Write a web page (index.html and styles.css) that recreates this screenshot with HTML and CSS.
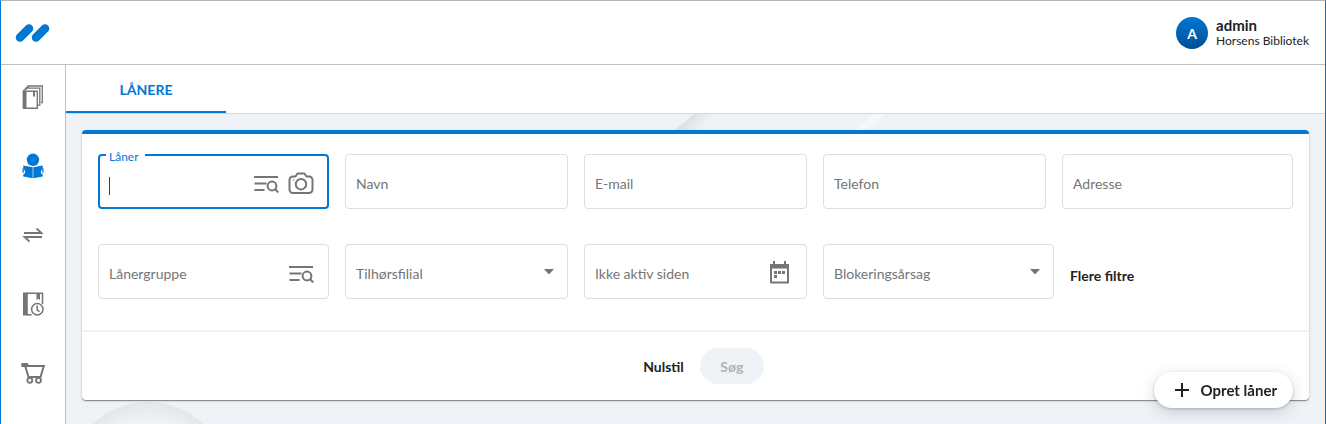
FILE: index.html
```html
<!DOCTYPE html>
<html lang="da">

<head>
    <meta charset="UTF-8">
    <meta name="viewport" content="width=device-width, initial-scale=1.0">
    <title>Lånere</title>
    <link rel="stylesheet" href="styles.css">
</head>

<body>
    <svg class="sprite" aria-hidden="true">
        <symbol id="list-search" viewBox="0 0 26 18">
            <path d="M1 2h24M1.500 8.500h12M1.500 15h10" fill="none" stroke="currentColor" stroke-width="2" />
            <circle cx="19" cy="11" r="4.400" fill="none" stroke="currentColor" stroke-width="2" />
            <path d="M22 14l3.200 3.500" fill="none" stroke="currentColor" stroke-width="2" />
        </symbol>
    </svg>

    <header class="header">
        <a class="logo" href="#" aria-label="Forside">
            <svg width="36" height="20" viewBox="0 0 36 20">
                <path d="M6 14.500L15 5.500M22 14.500L31 5.500" stroke="#0078d4" stroke-width="8.600" stroke-linecap="round" />
            </svg>
        </a>
        <div class="user">
            <span class="avatar">A</span>
            <div class="user-info">
                <span class="user-name">admin</span>
                <span class="user-library">Horsens Bibliotek</span>
            </div>
        </div>
    </header>

    <div class="layout">
        <nav class="sidebar">
            <a href="#" aria-label="Materialer">
                <svg width="24" height="24" viewBox="0 0 24 24" fill="none" stroke="currentColor">
                    <path d="M7 3V1h14.300v16.500H20" stroke-width="1.300" />
                    <path d="M5 5V3.200h13.800v17H17" stroke-width="1.300" />
                    <path d="M2.500 6.300H16.300V23.300H2.500z" stroke-width="1.400" />
                    <path d="M1.800 6.300h3.700v17.200h-3.700z" fill="currentColor" stroke="none" />
                    <path d="M2 6.500L7.500 1" stroke-width="1.400" />
                    <path d="M13 7v4.500" stroke-width="2" />
                </svg>
            </a>
            <a class="active" href="#" aria-label="Lånere">
                <svg width="24" height="26" viewBox="0 0 24 26" fill="currentColor">
                    <circle cx="12" cy="6.800" r="6.200" />
                    <path d="M2.300 12.500L11.700 14.200V25.200L2.300 23.500V21.300A2.200 2.200 0 0 0 3.500 17.500A2.200 2.200 0 0 0 2.300 15.500z" />
                    <path d="M21.700 12.500L12.300 14.200V25.200L21.700 23.500V21.300A2.200 2.200 0 0 1 20.500 17.500A2.200 2.200 0 0 1 21.700 15.500z" />
                    <path d="M1.500 15.300h1.300v4.500h-1.300zM21.200 15.300h1.300v4.500h-1.300z" />
                </svg>
            </a>
            <a href="#" aria-label="Udlån og aflevering">
                <svg width="24" height="24" viewBox="0 0 24 24" fill="none" stroke="currentColor" stroke-width="1.800">
                    <path d="M3 10h17.500L15.500 5.500M21 14H3.500L8.500 18.500" />
                </svg>
            </a>
            <a href="#" aria-label="Reserveringer">
                <svg width="24" height="24" viewBox="0 0 24 24" fill="none" stroke="currentColor" stroke-width="1.500">
                    <path d="M2 .500h4.800v23H2z" fill="currentColor" stroke="none" />
                    <path d="M6 1.200h15.500V12M6 22.800h4.500" />
                    <path d="M15.500 1h3.500v7l-1.700-1.200L15.500 8z" fill="currentColor" stroke="none" />
                    <circle cx="16.300" cy="17.300" r="5.700" />
                    <path d="M16.200 13.500v4.300l2.300 2" />
                </svg>
            </a>
            <a href="#" aria-label="Indkøb">
                <svg width="24" height="24" viewBox="0 0 24 24" fill="none" stroke="currentColor" stroke-width="1.800">
                    <path d="M.8 2.500h6v3h-6z" fill="currentColor" stroke-width="1" />
                    <path d="M4 4.500L7.500 16H19.500L22.800 5H5" stroke-width="2" />
                    <circle cx="8.800" cy="19.300" r="2.500" fill="#fff" />
                    <circle cx="17.500" cy="19.300" r="2.500" fill="#fff" />
                </svg>
            </a>
        </nav>

        <div class="content">
            <nav class="tabs">
                <a class="tab" href="#">LÅNERE</a>
            </nav>

            <main class="main">
                <svg class="backdrop" width="900" height="420" viewBox="0 0 900 420" aria-hidden="true">
                    <defs>
                        <linearGradient id="edge" gradientUnits="userSpaceOnUse" x1="618" y1="8" x2="630" y2="20">
                            <stop offset="0" stop-color="#dcdfe0" />
                            <stop offset="1" stop-color="#eff3f7" />
                        </linearGradient>
                        <radialGradient id="disc">
                            <stop offset="0" stop-color="#eff3f7" />
                            <stop offset=".75" stop-color="#eff3f7" />
                            <stop offset="1" stop-color="#e3e7e8" />
                        </radialGradient>
                    </defs>
                    <path d="M608 17L628 0H665L645 17z" fill="url(#edge)" />
                    <path d="M788 17L808 0H820L800 17z" fill="#f5f7f9" />
                    <circle cx="82" cy="368" r="80" fill="url(#disc)" />
                </svg>

                <form class="card">
                    <div class="filters">
                        <div class="row row-first">
                            <div class="field focused">
                                <input id="borrower" type="text">
                                <label for="borrower">Låner</label>
                                <span class="caret"></span>
                                <div class="field-icons">
                                    <button type="button" aria-label="Søg i liste">
                                        <svg width="26" height="18"><use href="#list-search" /></svg>
                                    </button>
                                    <button type="button" aria-label="Scan med kamera">
                                        <svg width="26" height="24" viewBox="0 0 26 24" fill="none" stroke="currentColor" stroke-width="2">
                                            <path d="M5 4.500h2.500L9.500 1.500h7l2 3H21A3.500 3.500 0 0 1 24.500 8v9.500A3.500 3.500 0 0 1 21 21H5a3.500 3.500 0 0 1-3.500-3.500V8A3.500 3.500 0 0 1 5 4.500z" stroke-linejoin="round" />
                                            <circle cx="13" cy="12.200" r="5.200" />
                                            <circle cx="5.500" cy="8" r=".8" fill="currentColor" stroke="none" />
                                        </svg>
                                    </button>
                                </div>
                            </div>
                            <div class="field">
                                <input id="name" type="text">
                                <label for="name">Navn</label>
                            </div>
                            <div class="field">
                                <input id="email" type="text">
                                <label for="email">E-mail</label>
                            </div>
                            <div class="field">
                                <input id="phone" type="text">
                                <label for="phone">Telefon</label>
                            </div>
                            <div class="field">
                                <input id="address" type="text">
                                <label for="address">Adresse</label>
                            </div>
                        </div>
                        <div class="row row-second">
                            <div class="field">
                                <input id="group" type="text">
                                <label for="group">Lånergruppe</label>
                                <div class="field-icons">
                                    <button type="button" aria-label="Vælg lånergruppe">
                                        <svg width="26" height="18"><use href="#list-search" /></svg>
                                    </button>
                                </div>
                            </div>
                            <div class="field">
                                <select id="branch">
                                    <option></option>
                                </select>
                                <label for="branch">Tilhørsfilial</label>
                                <svg class="arrow" width="10" height="6"><path d="M0 0h10L5 5.500z" fill="currentColor" /></svg>
                            </div>
                            <div class="field">
                                <input id="inactive" type="text">
                                <label for="inactive">Ikke aktiv siden</label>
                                <div class="field-icons">
                                    <button type="button" aria-label="Vælg dato">
                                        <svg width="24" height="28" viewBox="0 0 24 28" fill="none" stroke="currentColor" stroke-width="2">
                                            <path d="M3 5h17v17.500H3z" stroke-linejoin="round" />
                                            <path d="M2 4h19v4.500H2z" fill="currentColor" stroke="none" />
                                            <path d="M6 1v4M17 1v4" />
                                            <path d="M6 12.500h3m1 0h3m1 0h3M6 16.500h3" stroke-width="3" />
                                        </svg>
                                    </button>
                                </div>
                            </div>
                            <div class="field">
                                <select id="block">
                                    <option></option>
                                </select>
                                <label for="block">Blokeringsårsag</label>
                                <svg class="arrow" width="10" height="6"><path d="M0 0h10L5 5.500z" fill="currentColor" /></svg>
                            </div>
                            <button class="text-button more" type="button">Flere filtre</button>
                        </div>
                    </div>
                    <div class="actions">
                        <button class="text-button" type="reset">Nulstil</button>
                        <button class="search-button" type="submit" disabled>Søg</button>
                    </div>
                </form>
            </main>
        </div>
    </div>

    <button class="create-button" type="button">
        <svg width="14" height="14" viewBox="0 0 14 14"><path d="M7 0v14M0 7h14" stroke="currentColor" stroke-width="2" /></svg>
        Opret låner
    </button>
</body>

</html>
```
FILE: styles.css
```css
* {
    box-sizing: border-box;
}

body {
    margin: 0;
    min-height: 100vh;
    display: flex;
    flex-direction: column;
    border: 1px solid #0078d4;
    border-top-color: #b4b5bb;
    border-bottom: none;
    background: #fff;
    color: #222;
    font-family: Lato, "Open Sans", sans-serif;
    font-size: 14px;
}

button,
input,
select {
    font: inherit;
    color: inherit;
    border: none;
    background: none;
    padding: 0;
    margin: 0;
}

button {
    cursor: pointer;
}

svg {
    display: block;
}

.sprite {
    display: none;
}

.header {
    height: 64px;
    display: flex;
    align-items: center;
    justify-content: space-between;
    padding: 0 16px 0 13px;
    border-bottom: 1px solid #b9c1c9;
}

.user {
    display: flex;
    align-items: center;
    gap: 8px;
}

.avatar {
    width: 32px;
    height: 32px;
    border-radius: 50%;
    background: linear-gradient(#0078d4, #004e92);
    color: #fff;
    font-weight: bold;
    line-height: 34px;
    text-align: center;
}

.user-info {
    display: flex;
    flex-direction: column;
    padding-top: 1px;
    line-height: 16px;
}

.user-name {
    font-size: 15px;
    font-weight: bold;
}

.user-library {
    font-size: 12px;
}

.layout {
    flex: 1;
    display: flex;
}

.sidebar {
    flex: none;
    width: 65px;
    display: flex;
    flex-direction: column;
    align-items: center;
    gap: 45px;
    padding-top: 20px;
    border-right: 1px solid #b9c1c9;
}

.sidebar a {
    height: 24px;
    display: flex;
    align-items: center;
    color: #757575;
}

.sidebar .active {
    color: #0078d4;
}

.content {
    flex: 1;
    display: flex;
    flex-direction: column;
}

.tabs {
    display: flex;
    border-bottom: 1px solid #d5d7d9;
}

.tab {
    width: 160px;
    height: 48px;
    border-bottom: 2px solid #0078d4;
    color: #0078d4;
    font-weight: bold;
    line-height: 50px;
    text-align: center;
    text-decoration: none;
}

.main {
    flex: 1;
    position: relative;
    overflow: hidden;
    padding: 16px 16px 23px;
    background: #eff3f7;
}

.backdrop {
    position: absolute;
    top: 0;
    left: 0;
}

.card {
    position: relative;
    background: #fff;
    border-top: 4px solid #0078d4;
    border-radius: 4px;
    box-shadow: 0 1px 1px rgba(0, 0, 0, 0.4), 0 1px 3px rgba(0, 0, 0, 0.12);
}

.filters {
    display: flex;
    flex-direction: column;
    gap: 35px;
    padding: 20px 16px 31px;
}

.row {
    display: grid;
    gap: 16px;
}

.row-first {
    grid-template-columns: 231fr 223fr 223fr 223fr 231fr;
}

.row-second {
    grid-template-columns: 231fr 223fr 223fr 231fr 223fr;
}

/* input, label and icons share one grid cell */
.field {
    display: grid;
    align-items: center;
    height: 55px;
    color: #757575;
}

.field > * {
    grid-area: 1 / 1;
}

.field input,
.field select {
    width: 100%;
    min-width: 0;
    height: 100%;
    padding: 0 11px;
    border: 1px solid #dedede;
    border-radius: 4px;
    background: #fff;
    appearance: none;
    outline: none;
}

.field label {
    justify-self: start;
    padding: 3px 11px 0;
    pointer-events: none;
}

.focused input {
    border: 2px solid #0078d4;
}

.focused label {
    align-self: start;
    margin: -5px 0 0 8px;
    padding: 0 6px 0 3px;
    background: #fff;
    color: #0078d4;
    font-size: 12px;
    line-height: 16px;
}

.caret {
    width: 1px;
    height: 18px;
    margin: 8px 0 0 11px;
    background: #004e92;
}

.field-icons {
    justify-self: end;
    display: flex;
    align-items: center;
    gap: 9px;
    padding: 4px 15px 0 0;
}

.arrow {
    justify-self: end;
    margin-right: 14px;
}

.text-button {
    font-weight: bold;
}

.more {
    justify-self: start;
    padding-top: 8px;
}

.actions {
    display: flex;
    justify-content: center;
    gap: 16px;
    padding: 16px;
    border-top: 2px solid #eff3f7;
}

.actions .text-button {
    padding-left: 16px;
}

.search-button {
    width: 64px;
    height: 36px;
    border-radius: 18px;
    background: #eff3f7;
    color: #b0b3b5;
    font-weight: bold;
}

.create-button {
    position: fixed;
    right: 33px;
    bottom: 16px;
    display: flex;
    align-items: center;
    gap: 12px;
    height: 36px;
    padding: 0 16px 0 21px;
    border-radius: 18px;
    background: #fff;
    box-shadow: 0 1px 3px rgba(0, 0, 0, 0.2), 0 4px 16px rgba(0, 0, 0, 0.16);
    font-size: 15px;
    font-weight: bold;
}
```
